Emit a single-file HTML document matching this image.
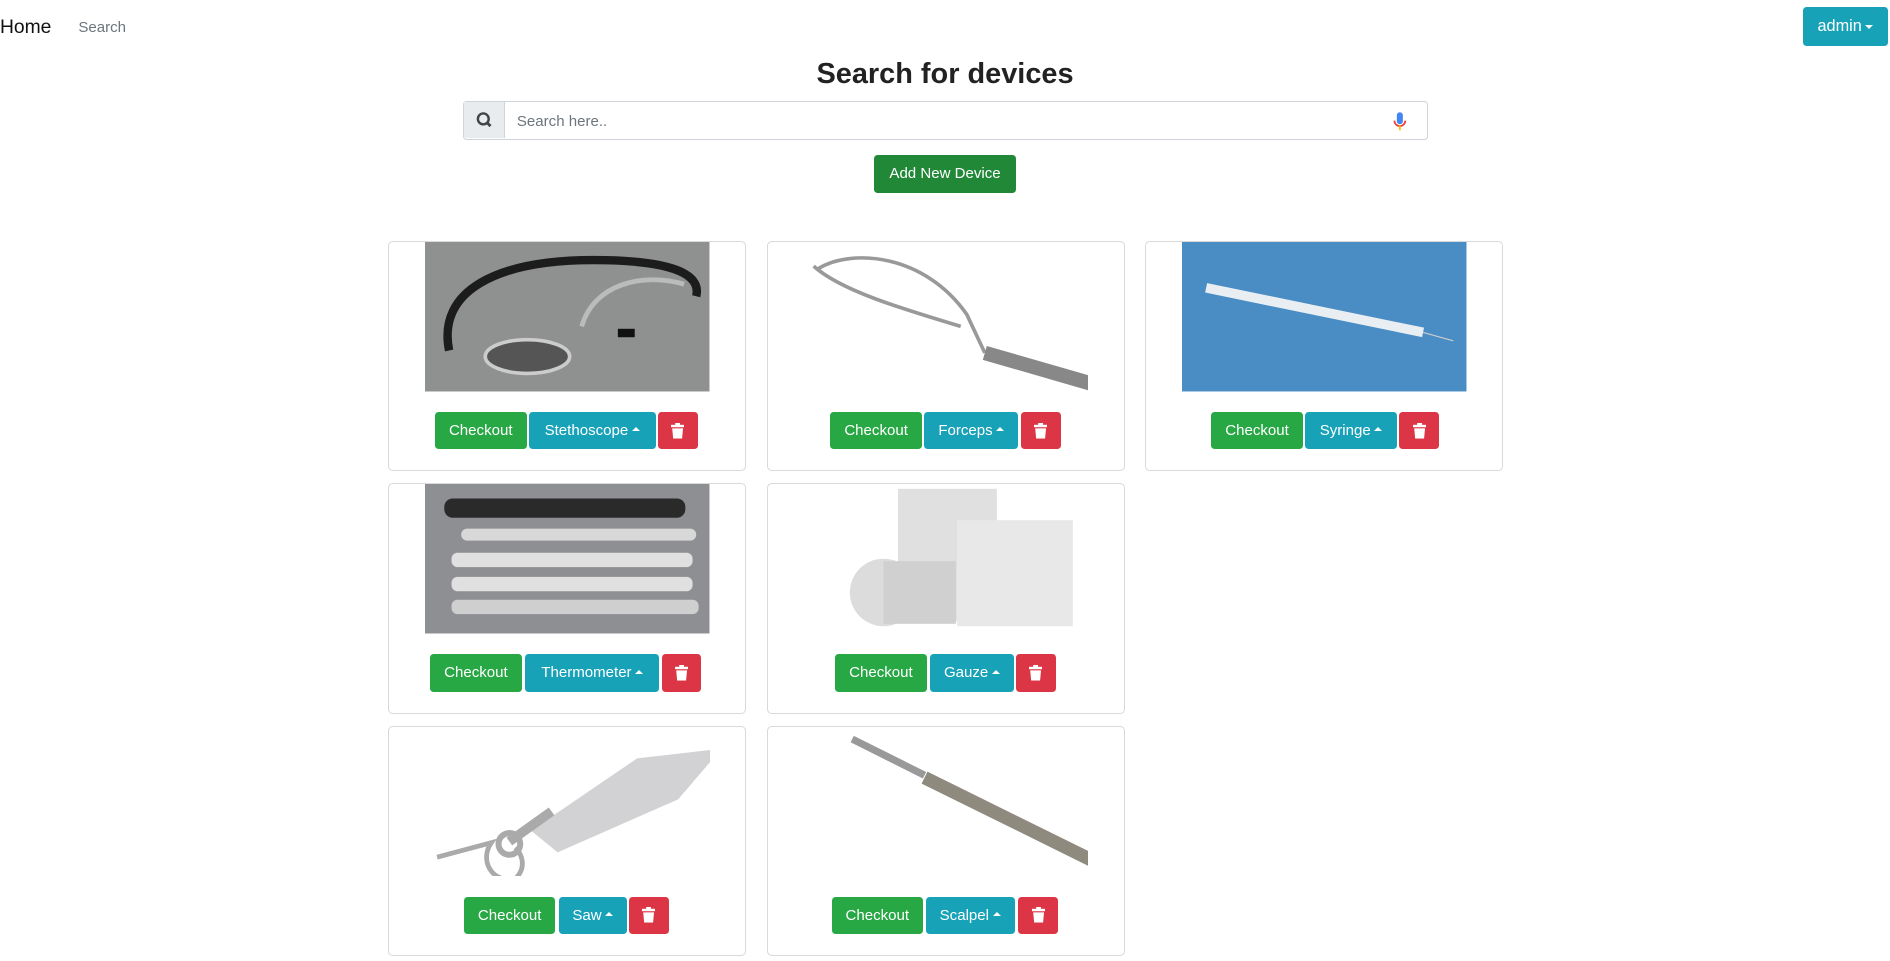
<!DOCTYPE html>
<html><head><meta charset="utf-8"><style>
*{box-sizing:border-box;margin:0;padding:0}
html,body{width:1890px;height:961px;overflow:hidden;background:#fff}
#w{zoom:1.2054;width:1568px;height:797px;position:relative;font-family:"Liberation Sans",sans-serif;color:#212529}
.a{position:absolute}
.card{position:absolute;width:297px;height:191px;border:1px solid #d9d9d9;border-radius:4px;background:#fff}
.img{position:absolute;left:30px;top:0;width:236px;height:124px;overflow:hidden}
.bg{position:absolute;top:141px;left:0;right:0;height:31px}
.b{position:absolute;top:0;height:31px;border-radius:3px;color:#fff;font-size:12.5px;line-height:32px;text-align:center;white-space:nowrap}
.g{background:#28a745}.t{background:#17a2b8}.r{background:#dc3545}
.car{display:inline-block;width:0;height:0;border-left:4px solid transparent;border-right:4px solid transparent;border-bottom:4px solid #fff;vertical-align:3px;margin-left:3px}
.r svg{position:absolute;left:11px;top:9px}
</style></head><body><div id="w">
<div class="a" style="left:0;top:14px;font-size:16px;color:#111">Home</div>
<div class="a" style="left:65px;top:16px;font-size:12.5px;color:#6c757d">Search</div>
<div class="a" style="left:1496px;top:6px;width:70px;height:32px;background:#17a2b8;border-radius:3px;color:#fff;font-size:13.5px;line-height:33px;text-align:center">admin<span class="car" style="transform:rotate(180deg);vertical-align:2px"></span></div>
<div class="a" style="left:0;width:1568px;top:48px;text-align:center;font-size:24px;font-weight:bold;color:#222">Search for devices</div>
<div class="a" style="left:384px;top:84px;width:801px;height:32px;border:1px solid #ced4da;border-radius:3px;background:#fff">
 <div class="a" style="left:0;top:0;width:34px;height:30px;background:#e9ecef;border-right:1px solid #ced4da"><svg width="34" height="30"><circle cx="16" cy="14" r="4.5" fill="none" stroke="#444" stroke-width="2"/><line x1="19" y1="17" x2="22" y2="20" stroke="#444" stroke-width="2.4"/></svg></div>
 <div class="a" style="left:44px;top:9px;font-size:12.5px;color:#6c757d">Search here..</div>
 <svg class="a" style="left:770px;top:7px" width="14" height="18"><rect x="4" y="1" width="5" height="10" rx="2.5" fill="#4285f4"/><path d="M2 8a4.5 4.5 0 0 0 9 0" fill="none" stroke="#ea4335" stroke-width="1.5"/><line x1="6.5" y1="12" x2="6.5" y2="16" stroke="#fbbc05" stroke-width="1.5"/></svg>
</div>
<div class="a" style="left:725px;top:129px;width:118px;height:31px;background:#218838;border-radius:3px;color:#fff;font-size:12.5px;line-height:32px;text-align:center">Add New Device</div>

<svg width="0" height="0" style="position:absolute"><symbol id="tr" viewBox="0 0 11 13"><rect x="0" y="1.5" width="11" height="2" fill="#fff"/><rect x="3.5" y="0" width="4" height="2" fill="#fff"/><path d="M1 4.5 H10 L9.2 13 H1.8 Z" fill="#fff"/></symbol></svg>

<!-- Row 1 -->
<div class="card" style="left:322px;top:200px">
 <div class="img"><svg width="236" height="124"><rect width="236" height="124" fill="#8f9090"/><path d="M20 90 C10 40 60 15 140 15 C200 15 230 25 225 45" fill="none" stroke="#1c1c1c" stroke-width="7"/><path d="M130 70 C140 35 180 25 215 35" fill="none" stroke="#bbb" stroke-width="4"/><ellipse cx="85" cy="95" rx="35" ry="14" fill="#555" stroke="#ccc" stroke-width="3"/><rect x="160" y="72" width="14" height="7" fill="#111"/></svg></div>
 <div class="bg"><div class="b g" style="left:38px;width:76px">Checkout</div><div class="b t" style="left:116px;width:105px">Stethoscope<span class="car"></span></div><div class="b r" style="left:223px;width:33px"><svg width="11" height="13"><use href="#tr"/></svg></div></div>
</div>
<div class="card" style="left:636px;top:200px">
 <div class="img"><svg width="236" height="124"><path d="M12 22 C40 5 100 10 135 60 L150 92" fill="none" stroke="#999" stroke-width="3"/><path d="M8 20 C30 40 80 55 130 70" fill="none" stroke="#999" stroke-width="3"/><path d="M150 92 L240 118" stroke="#888" stroke-width="12"/></svg></div>
 <div class="bg"><div class="b g" style="left:52px;width:76px">Checkout</div><div class="b t" style="left:130px;width:78px">Forceps<span class="car"></span></div><div class="b r" style="left:210px;width:33px"><svg width="11" height="13"><use href="#tr"/></svg></div></div>
</div>
<div class="card" style="left:950px;top:200px">
 <div class="img"><svg width="236" height="124"><rect width="236" height="124" fill="#4a8dc5"/><path d="M20 38 L200 75" stroke="#e8eef2" stroke-width="8"/><path d="M200 75 L225 82" stroke="#ccc" stroke-width="1"/></svg></div>
 <div class="bg"><div class="b g" style="left:54px;width:76px">Checkout</div><div class="b t" style="left:132px;width:76px">Syringe<span class="car"></span></div><div class="b r" style="left:210px;width:33px"><svg width="11" height="13"><use href="#tr"/></svg></div></div>
</div>
<!-- Row 2 -->
<div class="card" style="left:322px;top:401px">
 <div class="img"><svg width="236" height="124"><rect width="236" height="124" fill="#8e8f93"/><rect x="16" y="12" width="200" height="16" rx="7" fill="#2a2a2a"/><rect x="30" y="37" width="195" height="10" rx="5" fill="#d8d8d8"/><rect x="22" y="57" width="200" height="12" rx="5" fill="#e0e0e0"/><rect x="22" y="77" width="200" height="12" rx="5" fill="#e0e0e0"/><rect x="22" y="96" width="205" height="12" rx="5" fill="#cfcfcf"/></svg></div>
 <div class="bg"><div class="b g" style="left:34px;width:76px">Checkout</div><div class="b t" style="left:113px;width:111px">Thermometer<span class="car"></span></div><div class="b r" style="left:226px;width:33px"><svg width="11" height="13"><use href="#tr"/></svg></div></div>
</div>
<div class="card" style="left:636px;top:401px">
 <div class="img"><svg width="236" height="124"><rect x="78" y="4" width="82" height="110" fill="#e0e0e0"/><rect x="127" y="30" width="96" height="88" fill="#e8e8e8"/><ellipse cx="66" cy="90" rx="28" ry="28" fill="#dcdcdc"/><rect x="66" y="64" width="60" height="52" fill="#d0d0d0"/></svg></div>
 <div class="bg"><div class="b g" style="left:56px;width:76px">Checkout</div><div class="b t" style="left:135px;width:69px">Gauze<span class="car"></span></div><div class="b r" style="left:206px;width:33px"><svg width="11" height="13"><use href="#tr"/></svg></div></div>
</div>
<!-- Row 3 -->
<div class="card" style="left:322px;top:602px">
 <div class="img"><svg width="236" height="124"><path d="M88 86 L176 26 L246 18 L210 60 L110 104 Z" fill="#d2d2d4"/><path d="M70 95 L105 70" stroke="#aaa" stroke-width="8"/><circle cx="70" cy="97" r="9" fill="none" stroke="#aaa" stroke-width="5"/><path d="M10 108 L55 96 C45 110 55 130 75 126 C85 116 80 105 75 100" fill="none" stroke="#aaa" stroke-width="4"/></svg></div>
 <div class="bg"><div class="b g" style="left:62px;width:76px">Checkout</div><div class="b t" style="left:141px;width:56px">Saw<span class="car"></span></div><div class="b r" style="left:199px;width:33px"><svg width="11" height="13"><use href="#tr"/></svg></div></div>
</div>
<div class="card" style="left:636px;top:602px">
 <div class="img"><svg width="236" height="124"><path d="M40 10 L100 40" stroke="#999" stroke-width="6"/><path d="M100 42 L258 120" stroke="#8e8a7d" stroke-width="11"/></svg></div>
 <div class="bg"><div class="b g" style="left:53px;width:76px">Checkout</div><div class="b t" style="left:131px;width:74px">Scalpel<span class="car"></span></div><div class="b r" style="left:208px;width:33px"><svg width="11" height="13"><use href="#tr"/></svg></div></div>
</div>
</div></body></html>
